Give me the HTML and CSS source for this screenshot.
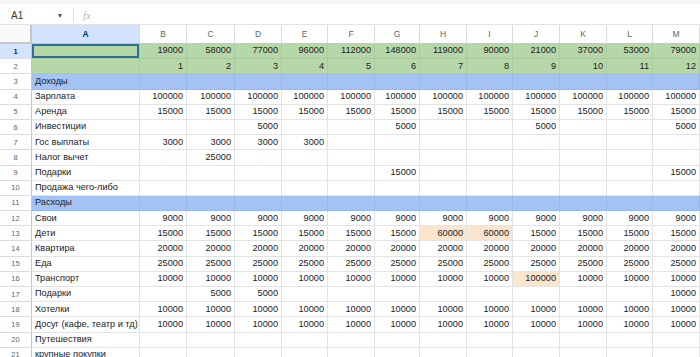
FILE: index.html
```html
<!DOCTYPE html>
<html lang="ru">
<head>
  <meta charset="UTF-8" />
  <title>Бюджет</title>
  <link rel="stylesheet" href="styles.css">
</head>
<body>
  <div class="top-strip"></div>
  <div class="formula-bar">
    <div class="name-box">A1</div>
    <span class="caret">&#9662;</span>
    <span class="sep"></span>
    <span class="fx">fx</span>
  </div>

  <div id="sheet" class="sheet"></div>

  <script>
    const cols = ["A", "B", "C", "D", "E", "F", "G", "H", "I", "J", "K", "L", "M"];
    const all = (v) => Array(12).fill(v);

    // label, values B..M, row style
    const rows = [
      ["", [19000, 58000, 77000, 96000, 112000, 148000, 119000, 90000, 21000, 37000, 53000, 79000], "green"],
      ["", [1, 2, 3, 4, 5, 6, 7, 8, 9, 10, 11, 12], "green"],
      ["Доходы", [], "blue"],
      ["Зарплата", all(100000)],
      ["Аренда", all(15000)],
      ["Инвестиции", ["", "", 5000, "", "", 5000, "", "", 5000, "", "", 5000]],
      ["Гос выплаты", [3000, 3000, 3000, 3000]],
      ["Налог вычет", ["", 25000]],
      ["Подарки", ["", "", "", "", "", 15000, "", "", "", "", "", 15000]],
      ["Продажа чего-либо", []],
      ["Расходы", [], "blue"],
      ["Свои", all(9000)],
      ["Дети", [15000, 15000, 15000, 15000, 15000, 15000, 60000, 60000, 15000, 15000, 15000, 15000]],
      ["Квартира", all(20000)],
      ["Еда", all(25000)],
      ["Транспорт", [10000, 10000, 10000, 10000, 10000, 10000, 10000, 10000, 100000, 10000, 10000, 10000]],
      ["Подарки", ["", 5000, 5000, "", "", "", "", "", "", "", "", 10000]],
      ["Хотелки", all(10000)],
      ["Досуг (кафе, театр и тд)", all(10000)],
      ["Путешествия", []],
      ["крупные покупки", []]
    ];
    const orange = { "13-7": 1, "13-8": 1, "16-9": 1 };

    const sheet = document.getElementById("sheet");
    const add = (cls, text) => {
      const d = document.createElement("div");
      d.className = cls;
      d.textContent = text;
      sheet.appendChild(d);
      return d;
    };

    add("corner", "");
    cols.forEach((c) => add(c === "A" ? "col-head active" : "col-head", c));

    rows.forEach((row, i) => {
      const n = i + 1;
      const tone = row[2] ? " " + row[2] : "";
      add(n === 1 ? "row-head active" : "row-head", n);
      add("cell label" + tone + (n === 1 ? " selected" : ""), row[0]);
      for (let j = 0; j < 12; j++) {
        const v = row[1][j];
        let cls = "cell num" + tone;
        if (orange[n + "-" + (j + 1)]) cls += " orange";
        add(cls, v === undefined ? "" : v);
      }
    });
  </script>
</body>
</html>
```

FILE: styles.css
```css
* {
  box-sizing: border-box;
}

body {
  margin: 0;
  background: #fff;
  font-family: "Liberation Sans", Arial, sans-serif;
  color: #202124;
  overflow: hidden;
}

.top-strip {
  height: 4px;
  background: #f3f5f7;
}

.formula-bar {
  height: 21px;
  display: flex;
  align-items: center;
  padding-top: 2px;
  border-bottom: 1px solid #e1e3e6;
  font-size: 10px;
}

.name-box {
  width: 58px;
  padding-left: 11px;
  color: #333;
}

.caret {
  font-size: 8px;
  color: #555;
  width: 12px;
}

.sep {
  width: 1px;
  height: 14px;
  background: #dadce0;
  margin: 0 9px 0 3px;
}

.fx {
  font-family: "Liberation Serif", serif;
  font-style: italic;
  color: #b5b8bc;
  font-size: 11px;
}

.sheet {
  display: grid;
  grid-template-columns: 32px 108px 47px 48px 47px 46px 47px 45px 47px 46px 47px 47px 46px 47px;
  grid-template-rows: 19px;
  grid-auto-rows: 15.2px;
  font-size: 9.2px;
}

.corner,
.col-head,
.row-head {
  background: #fff;
  color: #5f6368;
  border-right: 1px solid #d9dbde;
  border-bottom: 1px solid #d9dbde;
  display: flex;
  align-items: center;
  justify-content: center;
}

.corner {
  background: #f8f9fa;
  border-right: 2px solid #c4c7c5;
  border-bottom: 2px solid #c4c7c5;
}

.col-head {
  font-size: 8.5px;
  border-bottom: 1px solid #c4c7c5;
}

.row-head {
  font-size: 7.5px;
  border-right: 1px solid #c4c7c5;
}

.col-head.active,
.row-head.active {
  background: #d3e3fd;
  color: #0b2f66;
  font-weight: bold;
}

.cell {
  border-right: 1px solid #e2e3e3;
  border-bottom: 1px solid #e2e3e3;
  white-space: nowrap;
  overflow: visible;
  display: flex;
  align-items: center;
  padding: 0 3px;
  line-height: 1;
}

.label {
  justify-content: flex-start;
  padding-left: 3px;
}

.num {
  justify-content: flex-end;
}

.green {
  background: #b6d7a8;
  border-color: #a9cc9a;
}

.blue {
  background: #a4c2f4;
  border-color: #98b8ec;
}

.orange {
  background: #fce5cd;
}

.selected {
  box-shadow: inset 0 0 0 2px #2f6f93;
}
```
